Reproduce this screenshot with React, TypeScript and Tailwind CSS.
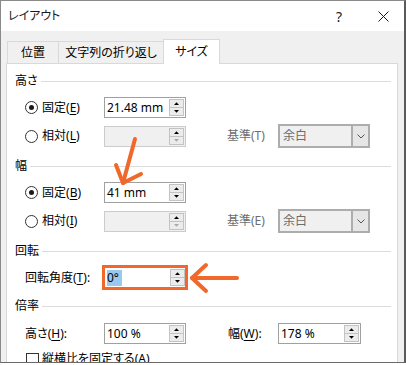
import React from "react";

const Tri = ({ up, color = "#000" }: { up?: boolean; color?: string }) => (
  <svg width="5" height="3" viewBox="0 0 5 3" className="block">
    {up ? <path d="M0 3 H5 L2.5 0.2 Z" fill={color} /> : <path d="M0 0 H5 L2.5 2.8 Z" fill={color} />}
  </svg>
);

const Spin = ({ disabled }: { disabled?: boolean }) => (
  <div className="flex h-[17px] w-[15px] flex-col">
    <div className="flex h-[9px] items-center justify-center border border-[#c3c3c3] bg-[#ececec]">
      <Tri up />
    </div>
    <div className="flex h-[8px] items-center justify-center border border-t-0 border-[#c3c3c3] bg-[#ececec]">
      <Tri color={disabled ? "#a8a8a8" : "#000"} />
    </div>
  </div>
);

function NumBox({ value, disabled, wide }: { value?: React.ReactNode; disabled?: boolean; wide?: boolean }) {
  return (
    <div
      className={`flex h-[21px] shrink-0 items-center justify-between border pl-[2px] pr-[1px] ${wide ? "w-[83px]" : "w-[82px]"} ${
        disabled ? "border-[#cccccc] bg-[#f0f0f0]" : "border-[#a0a0a0] bg-white"
      }`}
    >
      <span className="leading-none">{value}</span>
      <Spin disabled={disabled} />
    </div>
  );
}

function Combo() {
  return (
    <div className="flex h-[24px] w-[92px] shrink-0 border-2 border-[#adadad] bg-[#f0f0f0]">
      <div className="flex flex-1 items-center pl-[3px] text-[#6d6d6d]">余白</div>
      <div className="flex w-[17px] items-center justify-center border-l-2 border-[#adadad] bg-[#e6e6e6]">
        <svg width="8" height="5" viewBox="0 0 8 5">
          <path d="M0.5 0.5 L4 4 L7.5 0.5" stroke="#555" fill="none" />
        </svg>
      </div>
    </div>
  );
}

function Header({ children }: { children: React.ReactNode }) {
  return (
    <div className="flex h-[20px] items-center">
      <span>{children}</span>
      <div className="ml-[3px] h-px flex-1 bg-[#dcdcdc]" />
    </div>
  );
}

function Radio({ checked }: { checked?: boolean }) {
  return (
    <div className="flex h-[13px] w-[13px] shrink-0 items-center justify-center rounded-full border border-[#333333] bg-white">
      {checked && <div className="h-[5px] w-[5px] rounded-full bg-[#1a1a1a]" />}
    </div>
  );
}

function RadioLabel({ checked, text, acc }: { checked?: boolean; text: string; acc: string }) {
  return (
    <div className="flex w-[79px] shrink-0 items-center">
      <Radio checked={checked} />
      <span className="ml-[4px]">
        {text}(<span className="underline underline-offset-[2px]">{acc}</span>)
      </span>
    </div>
  );
}

export default function App() {
  return (
    <div className="relative h-[365px] w-[406px] overflow-hidden bg-white font-['Noto_Sans','Noto_Sans_CJK_JP',sans-serif] text-[12px] text-black [font-feature-settings:'palt']">
      <div className="flex h-[363px] w-[406px] flex-col overflow-hidden border-b border-l border-r-2 border-t border-b-[#6a6a6a] border-l-[#8a8a8a] border-r-[#5a5a5a] border-t-[#8a8a8a] bg-[#f0f0f0]">
        {/* title bar */}
        <div className="flex h-[30px] shrink-0 items-center bg-white">
          <span className="pl-[7px] text-[12px] text-[#1a1a1a]">レイアウト</span>
          <div className="ml-auto flex h-full">
            <div className="flex w-[46px] items-center justify-center text-[14px] text-[#1a1a1a]">?</div>
            <div className="flex w-[42px] items-center justify-center">
              <svg width="11" height="11" viewBox="0 0 11 11">
                <path d="M0.5 0.5 L10.5 10.5 M10.5 0.5 L0.5 10.5" stroke="#1a1a1a" strokeWidth="1" />
              </svg>
            </div>
          </div>
        </div>

        {/* tabs */}
        <div className="relative z-10 -mb-px mt-[8px] flex h-[25px] shrink-0 items-end pl-[6px]">
          <div className="flex h-[23px] w-[52px] items-center justify-center border border-b-0 border-[#d9d9d9] pb-[1px]">
            位置
          </div>
          <div className="flex h-[23px] w-[104px] items-center justify-center border-t border-[#d9d9d9] pb-[1px]">
            文字列の折り返し
          </div>
          <div className="flex h-[25px] w-[57px] items-center justify-center border border-b-0 border-[#d9d9d9] bg-white">
            サイズ
          </div>
        </div>

        {/* panel */}
        <div className="ml-[5px] h-[330px] w-[392px] shrink-0 border border-[#d9d9d9] bg-white pl-[8px] pr-[6px] pt-[7px]">
          <Header>高さ</Header>
          <div className="mt-[6px] flex h-[21px] items-center pl-[10px]">
            <RadioLabel checked text="固定" acc="E" />
            <NumBox value="21.48 mm" />
          </div>
          <div className="mt-[6px] flex h-[24px] items-center pl-[10px]">
            <RadioLabel text="相対" acc="L" />
            <NumBox disabled />
            <div className="ml-[41px] w-[51px] shrink-0 text-[#6d6d6d]">基準(T)</div>
            <Combo />
          </div>

          <div className="mt-[8px]">
            <Header>幅</Header>
          </div>
          <div className="mt-[6px] flex h-[21px] items-center pl-[10px]">
            <RadioLabel checked text="固定" acc="B" />
            <NumBox value="41 mm" />
          </div>
          <div className="mt-[6px] flex h-[24px] items-center pl-[10px]">
            <RadioLabel text="相対" acc="I" />
            <NumBox disabled />
            <div className="ml-[41px] w-[51px] shrink-0 text-[#6d6d6d]">基準(E)</div>
            <Combo />
          </div>

          <div className="mt-[8px]">
            <Header>回転</Header>
          </div>
          <div className="mt-[4px] flex h-[25px] items-center pl-[10px]">
            <div className="w-[77px] shrink-0">
              回転角度(<span className="underline underline-offset-[2px]">T</span>):
            </div>
            <div className="flex h-[25px] w-[86px] shrink-0 items-center justify-between border-[3px] border-[#f0682a] bg-white pl-[2px] pr-0">
              <span className="w-[15px] bg-[#99c9ef] leading-[16px]">0°</span>
              <Spin />
            </div>
          </div>

          <div className="mt-[6px]">
            <Header>倍率</Header>
          </div>
          <div className="mt-[7px] flex h-[21px] items-center pl-[10px]">
            <div className="w-[79px] shrink-0">
              高さ(<span className="underline underline-offset-[2px]">H</span>):
            </div>
            <NumBox value="100 %" />
            <div className="ml-[42px] w-[50px] shrink-0">
              幅(<span className="underline underline-offset-[2px]">W</span>):
            </div>
            <NumBox value="178 %" wide />
          </div>
          <div className="mt-[8px] flex items-start pl-[11px]">
            <div className="mt-[1px] h-[13px] w-[13px] shrink-0 border border-[#333333] bg-white" />
            <span className="ml-[3px] leading-[14px]">
              縦横比を固定する(<span className="underline underline-offset-[2px]">A</span>)
            </span>
          </div>
        </div>
      </div>

      {/* annotation arrows */}
      <svg className="pointer-events-none absolute left-0 top-0" width="406" height="365">
        <g stroke="#f0682a" strokeWidth="4" strokeLinecap="round" strokeLinejoin="round" fill="none">
          <path d="M135 139 L123 183" />
          <path d="M116 165 L123 183 L141 174" />
          <path d="M237 278 L192 278" />
          <path d="M206 265 L192 278 L206 291" />
        </g>
      </svg>
    </div>
  );
}
